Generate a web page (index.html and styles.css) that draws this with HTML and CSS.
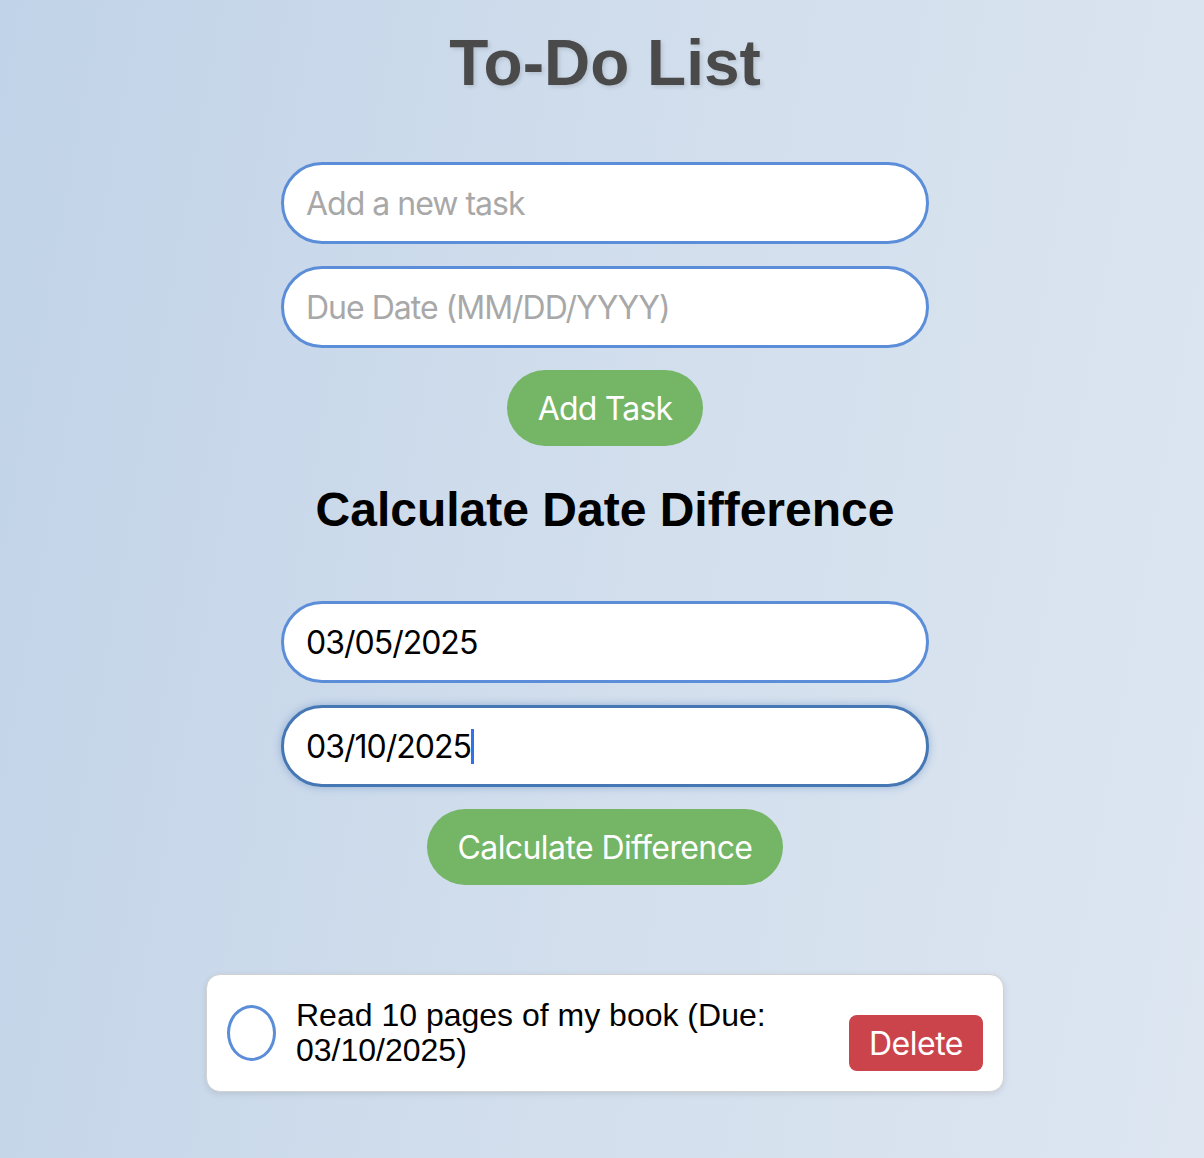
FILE: index.html
```html
<!DOCTYPE html>
<html lang="en">
<head>
<meta charset="utf-8">
<title>To-Do List</title>
<link rel="stylesheet" href="styles.css">
</head>
<body>
<main class="app">
  <h1 class="title">To-Do List</h1>

  <div class="form">
    <input class="field" type="text" placeholder="Add a new task">
    <input class="field" type="text" placeholder="Due Date (MM/DD/YYYY)">
    <button class="btn btn-add">Add Task</button>
  </div>

  <h2 class="subtitle">Calculate Date Difference</h2>

  <div class="form">
    <input class="field" type="text" value="03/05/2025">
    <div class="field-wrap">
      <input class="field is-focused" type="text" value="03/10/2025">
      <span class="caret"></span>
    </div>
    <button class="btn btn-calc">Calculate Difference</button>
  </div>

  <ul class="tasks">
    <li class="task">
      <span class="check"></span>
      <span class="task-text">Read 10 pages of my book (Due: 03/10/2025)</span>
      <button class="delete">Delete</button>
    </li>
  </ul>
</main>
</body>
</html>
```

FILE: styles.css
```css
html, body {
  margin: 0;
  padding: 0;
}

body {
  min-height: 100vh;
  padding-left: 6px;
  box-sizing: border-box;
  background: linear-gradient(100deg, #c1d3e8 0%, #d3dfed 55%, #dde6f1 100%);
  font-family: "Liberation Sans", Arial, sans-serif;
  color: #000;
}

.app {
  width: 798px;
  margin: 0 auto;
  display: flex;
  flex-direction: column;
  align-items: center;
}

.title {
  margin: 27px 0 63px;
  font-size: 64px;
  line-height: 72px;
  font-weight: bold;
  color: #4a4a4a;
  text-shadow: 2px 2px 4px rgba(0, 0, 0, 0.12);
}

.form {
  display: flex;
  flex-direction: column;
  align-items: center;
  gap: 22px;
}

.field-wrap {
  position: relative;
  display: flex;
}

.field {
  width: 648px;
  height: 82px;
  box-sizing: border-box;
  border: 3px solid #5b8dd9;
  border-radius: 41px;
  padding: 0 22px;
  background: #fff;
  font-family: Inter, "Noto Sans", sans-serif;
  font-size: 32px;
  letter-spacing: -1px;
  color: #000;
  outline: none;
}

.field::placeholder {
  color: #a8a8a8;
}

.field.is-focused {
  border-color: #4677b5;
  box-shadow: 0 0 8px rgba(70, 119, 181, 0.45);
}

.caret {
  position: absolute;
  left: 190px;
  top: 24px;
  width: 3px;
  height: 35px;
  background: #2f72ec;
}

.btn {
  height: 76px;
  padding: 0 31px;
  border: none;
  border-radius: 38px;
  background: #74b566;
  color: #fff;
  font-family: Inter, "Noto Sans", sans-serif;
  font-size: 32px;
  letter-spacing: -0.8px;
  cursor: pointer;
}

.btn-calc {
  letter-spacing: -0.6px;
}

.subtitle {
  margin: 36px 0 63px;
  font-size: 48px;
  line-height: 56px;
  font-weight: bold;
}

.tasks {
  list-style: none;
  margin: 89px 0 0;
  padding: 0;
  width: 798px;
}

.task {
  height: 118px;
  box-sizing: border-box;
  display: flex;
  align-items: center;
  gap: 20px;
  padding: 0 20px;
  background: #fff;
  border: 1px solid #d2d2d2;
  border-radius: 14px;
  box-shadow: 0 2px 6px rgba(0, 0, 0, 0.1);
}

.check {
  flex: none;
  width: 49px;
  height: 56px;
  box-sizing: border-box;
  border: 3px solid #5b8dd9;
  border-radius: 50%;
}

.task-text {
  flex: 1;
  font-size: 32px;
  line-height: 35px;
}

.delete {
  flex: none;
  width: 134px;
  height: 56px;
  margin-top: 20px;
  border: none;
  border-radius: 8px;
  background: #cc444b;
  color: #fff;
  font-family: Inter, "Noto Sans", sans-serif;
  font-size: 32px;
  letter-spacing: -0.5px;
  cursor: pointer;
}
```
